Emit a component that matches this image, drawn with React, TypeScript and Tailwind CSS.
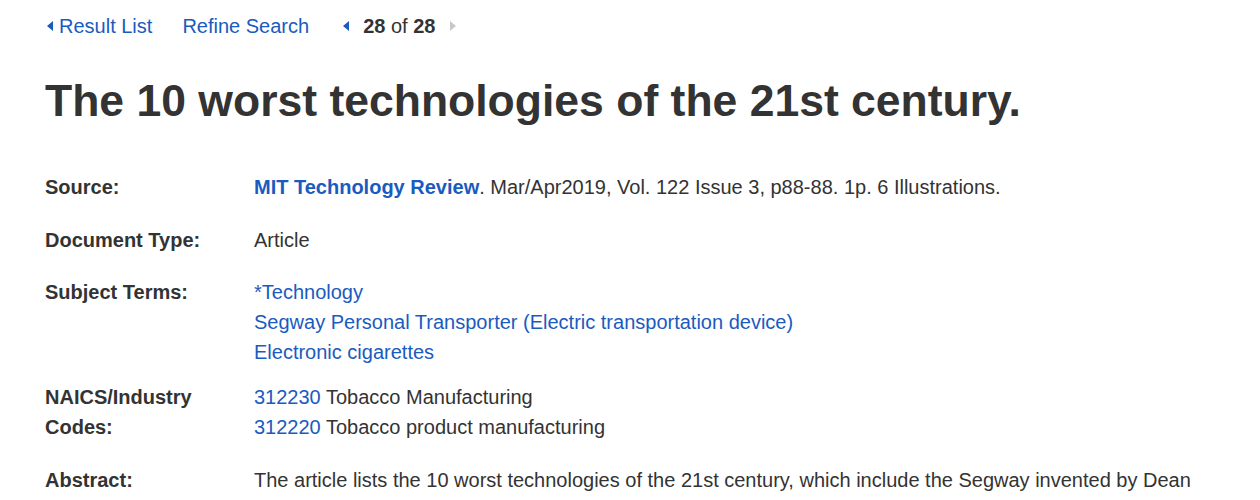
import React from 'react';

const Tri = ({ dir, color }: { dir: 'left' | 'right'; color: string }) => (
  <svg width="6" height="10" viewBox="0 0 6 10" className="flex-shrink-0">
    {dir === 'left' ? <path d="M6 0v10L0 5z" fill={color} /> : <path d="M0 0v10l6-5z" fill={color} />}
  </svg>
);

const Row = ({ label, children, className = '' }: { label: React.ReactNode; children: React.ReactNode; className?: string }) => (
  <div className={`flex ${className}`}>
    <div className="w-[209px] flex-shrink-0 font-bold text-[#333]">{label}</div>
    <div className="flex-1">{children}</div>
  </div>
);

export default function App() {
  return (
    <div className="w-[1260px] h-[500px] overflow-hidden bg-white px-[45px] text-[20px] leading-[30px] text-[#333]" style={{ fontFamily: '"Liberation Sans", Arial, sans-serif' }}>
      {/* навигация */}
      <div className="flex items-center h-[30px] mt-[11px]">
        <a className="flex items-center gap-[6px] text-[#1a5bbf] ml-[2px]">
          <Tri dir="left" color="#1a5bbf" />
          <span>Result List</span>
        </a>
        <a className="ml-[30px] text-[#1a5bbf]">Refine Search</a>
        <span className="ml-[34px]"><Tri dir="left" color="#1a5bbf" /></span>
        <span className="ml-[14px]"><b>28</b> of <b>28</b></span>
        <span className="ml-[15px]"><Tri dir="right" color="#c8c8c8" /></span>
      </div>

      <h1 className="mt-[32px] text-[44.5px] leading-[56px] font-bold text-[#333]">The 10 worst technologies of the 21st century.</h1>

      <div className="mt-[43px]">
        <Row label="Source:">
          <a className="font-bold text-[#1a5bbf]">MIT Technology Review</a>. Mar/Apr2019, Vol. 122 Issue 3, p88-88. 1p. 6 Illustrations.
        </Row>
        <Row label="Document Type:" className="mt-[23px]">Article</Row>
        <Row label="Subject Terms:" className="mt-[22px]">
          <div><a className="text-[#1a5bbf]">*Technology</a></div>
          <div><a className="text-[#1a5bbf]">Segway Personal Transporter (Electric transportation device)</a></div>
          <div><a className="text-[#1a5bbf]">Electronic cigarettes</a></div>
        </Row>
        <Row label={<>NAICS/Industry<br />Codes:</>} className="mt-[15px]">
          <div><a className="text-[#1a5bbf]">312230</a> Tobacco Manufacturing</div>
          <div><a className="text-[#1a5bbf]">312220</a> Tobacco product manufacturing</div>
        </Row>
        <Row label="Abstract:" className="mt-[23px]">
          The article lists the 10 worst technologies of the 21st century, which include the Segway invented by Dean Kamen, electronic cigarettes and others.
        </Row>
      </div>
    </div>
  );
}
